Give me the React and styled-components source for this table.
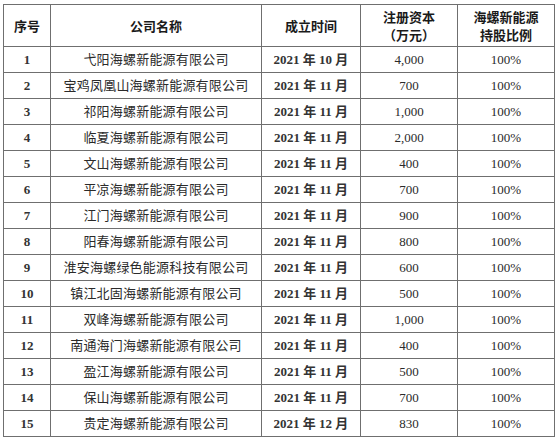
import React from 'react';
import styled, { createGlobalStyle } from 'styled-components';

const GlobalStyle = createGlobalStyle`
  html, body {
    margin: 0;
    padding: 0;
    background: #ffffff;
  }
  body {
    padding: 4px 0 0 3px;
  }
`;

const Table = styled.table`
  width: 551px;
  table-layout: fixed;
  border-collapse: collapse;
  font-family: "Liberation Serif", "Noto Sans CJK SC", serif;
  font-size: 13px;
  color: #2a2a2a;
`;

const HeadCell = styled.th`
  height: 41px;
  padding: 0;
  border: 1px solid #6f6f6f;
  font-family: "Noto Sans CJK SC", sans-serif;
  font-weight: 700;
  font-size: 13px;
  line-height: 18px;
  color: #1a1a1a;
  text-align: center;
  vertical-align: middle;
`;

const Cell = styled.td`
  height: 25px;
  padding: 0;
  border: 1px solid #6f6f6f;
  text-align: center;
  vertical-align: middle;
  line-height: 13px;
  letter-spacing: ${p => (p.$name ? '0.2px' : '0')};
  font-weight: ${p => (p.$bold ? 700 : 400)};
  color: ${p => (p.$bold ? '#333' : '#2a2a2a')};
`;

const rows = [
  ['1', '弋阳海螺新能源有限公司', '2021 年 10 月', '4,000'],
  ['2', '宝鸡凤凰山海螺新能源有限公司', '2021 年 11 月', '700'],
  ['3', '祁阳海螺新能源有限公司', '2021 年 11 月', '1,000'],
  ['4', '临夏海螺新能源有限公司', '2021 年 11 月', '2,000'],
  ['5', '文山海螺新能源有限公司', '2021 年 11 月', '400'],
  ['6', '平凉海螺新能源有限公司', '2021 年 11 月', '700'],
  ['7', '江门海螺新能源有限公司', '2021 年 11 月', '900'],
  ['8', '阳春海螺新能源有限公司', '2021 年 11 月', '800'],
  ['9', '淮安海螺绿色能源科技有限公司', '2021 年 11 月', '600'],
  ['10', '镇江北固海螺新能源有限公司', '2021 年 11 月', '500'],
  ['11', '双峰海螺新能源有限公司', '2021 年 11 月', '1,000'],
  ['12', '南通海门海螺新能源有限公司', '2021 年 11 月', '400'],
  ['13', '盈江海螺新能源有限公司', '2021 年 11 月', '500'],
  ['14', '保山海螺新能源有限公司', '2021 年 11 月', '700'],
  ['15', '贵定海螺新能源有限公司', '2021 年 12 月', '830'],
];

export default function App() {
  return (
    <>
      <GlobalStyle />
      <Table>
        <colgroup>
          <col style={{ width: 47 }} />
          <col style={{ width: 211 }} />
          <col style={{ width: 99 }} />
          <col style={{ width: 97 }} />
          <col style={{ width: 97 }} />
        </colgroup>
        <thead>
          <tr>
            <HeadCell>序号</HeadCell>
            <HeadCell>公司名称</HeadCell>
            <HeadCell>成立时间</HeadCell>
            <HeadCell>注册资本<br />（万元）</HeadCell>
            <HeadCell>海螺新能源<br />持股比例</HeadCell>
          </tr>
        </thead>
        <tbody>
          {rows.map(([no, name, date, capital]) => (
            <tr key={no}>
              <Cell $bold>{no}</Cell>
              <Cell $name>{name}</Cell>
              <Cell $bold>{date}</Cell>
              <Cell>{capital}</Cell>
              <Cell>100%</Cell>
            </tr>
          ))}
        </tbody>
      </Table>
    </>
  );
}
